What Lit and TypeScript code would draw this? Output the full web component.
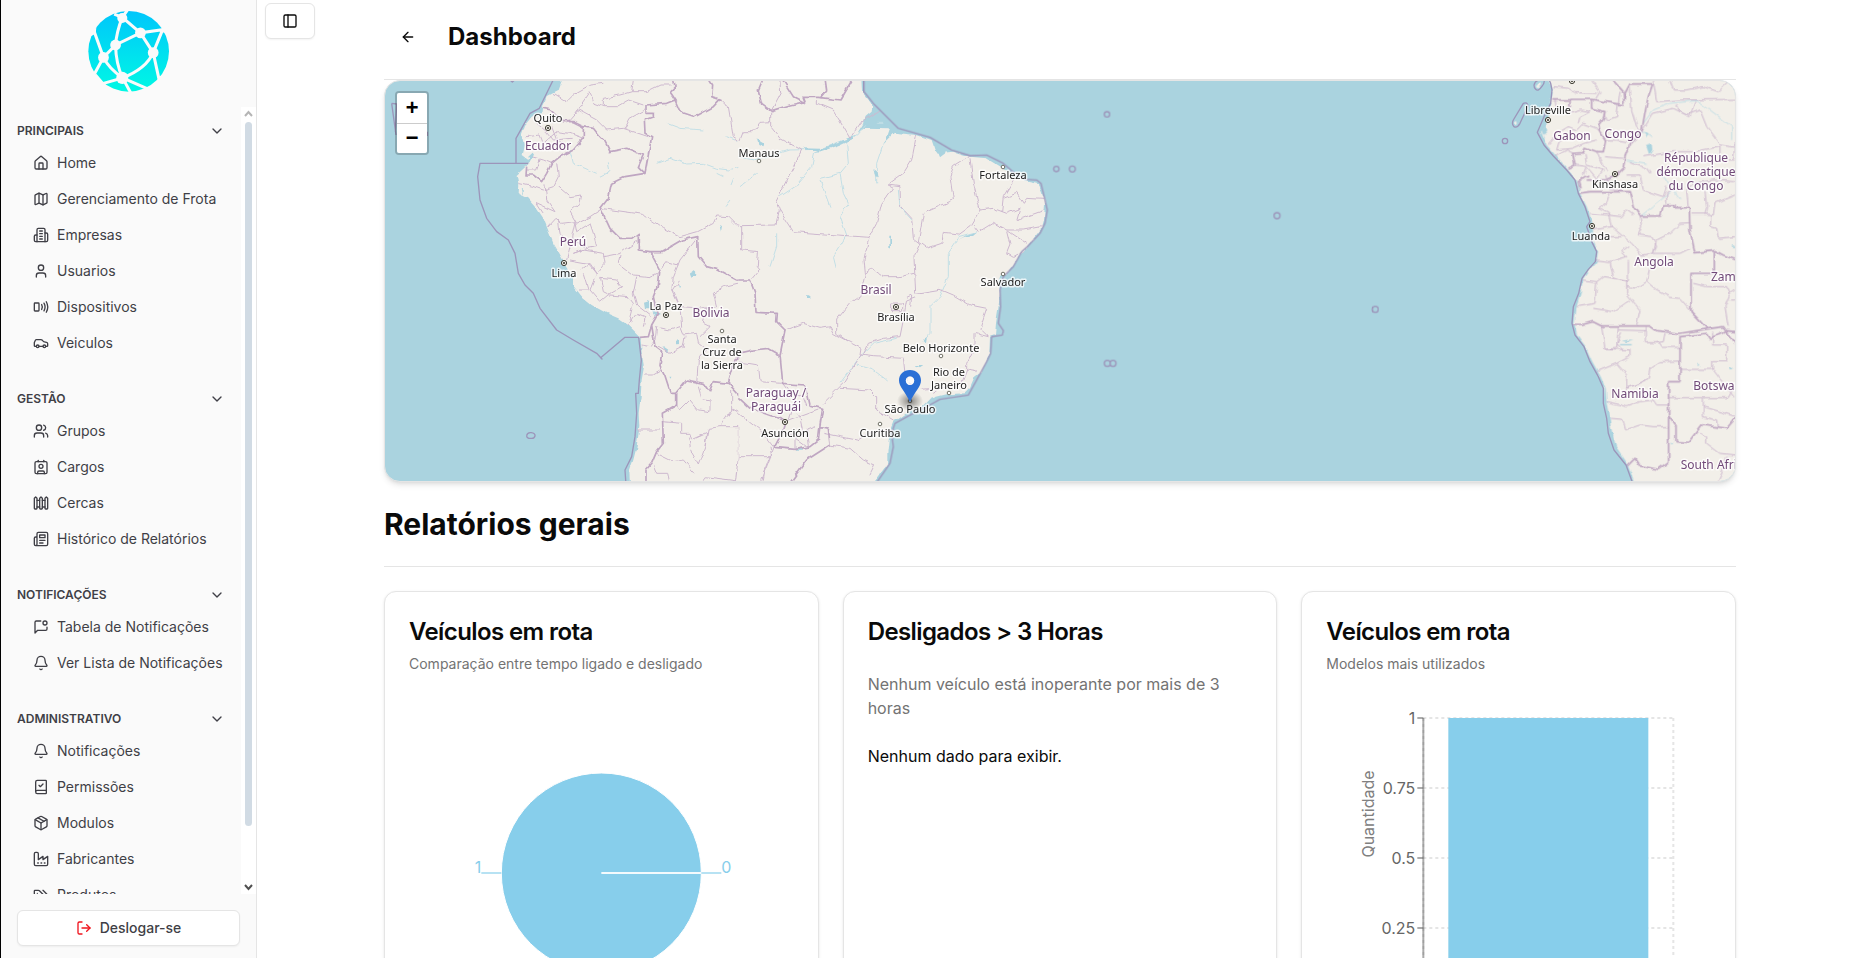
import { LitElement, html, svg, css } from "lit";
import { customElement, property } from "lit/decorators.js";

const ICONS: Record<string, string[]> = {
  house: [
    "M15 21v-8a1 1 0 0 0-1-1h-4a1 1 0 0 0-1 1v8",
    "M3 10a2 2 0 0 1 .709-1.528l7-5.999a2 2 0 0 1 2.582 0l7 5.999A2 2 0 0 1 21 10v9a2 2 0 0 1-2 2H5a2 2 0 0 1-2-2z",
  ],
  map: [
    "M14.106 5.553a2 2 0 0 0 1.788 0l3.659-1.83A1 1 0 0 1 21 4.619v12.764a1 1 0 0 1-.553.894l-4.553 2.277a2 2 0 0 1-1.788 0l-4.212-2.106a2 2 0 0 0-1.788 0l-3.659 1.83A1 1 0 0 1 3 19.381V6.618a1 1 0 0 1 .553-.894l4.553-2.277a2 2 0 0 1 1.788 0z",
    "M15 5.764v15",
    "M9 3.236v15",
  ],
  building: [
    "M6 22V4a2 2 0 0 1 2-2h8a2 2 0 0 1 2 2v18Z",
    "M6 12H4a2 2 0 0 0-2 2v6a2 2 0 0 0 2 2h2",
    "M18 9h2a2 2 0 0 1 2 2v9a2 2 0 0 1-2 2h-2",
    "M10 6h4",
    "M10 10h4",
    "M10 14h4",
    "M10 18h4",
  ],
  user: ["M19 21v-2a4 4 0 0 0-4-4H9a4 4 0 0 0-4 4v2", "M8 7a4 4 0 1 0 8 0a4 4 0 1 0-8 0"],
  nfc: [
    "M3 6h5a1 1 0 0 1 1 1v10a1 1 0 0 1-1 1H3a1 1 0 0 1-1-1V7a1 1 0 0 1 1-1z",
    "M13 8.32a7.43 7.43 0 0 1 0 7.36",
    "M16.46 6.21a11.76 11.76 0 0 1 0 11.58",
    "M19.91 4.1a15.91 15.91 0 0 1 .01 15.8",
  ],
  car: [
    "M19 17h2c.6 0 1-.4 1-1v-3c0-.9-.7-1.7-1.5-1.9C18.7 10.6 16 10 16 10s-1.3-1.4-2.2-2.3c-.5-.4-1.1-.7-1.8-.7H5c-.6 0-1.1.4-1.4.9l-1.4 2.9A3.7 3.7 0 0 0 2 12v4c0 .6.4 1 1 1h2",
    "M5 17a2 2 0 1 0 4 0a2 2 0 1 0-4 0",
    "M9 17h6",
    "M15 17a2 2 0 1 0 4 0a2 2 0 1 0-4 0",
  ],
  users: [
    "M16 21v-2a4 4 0 0 0-4-4H6a4 4 0 0 0-4 4v2",
    "M5 7a4 4 0 1 0 8 0a4 4 0 1 0-8 0",
    "M22 21v-2a4 4 0 0 0-3-3.87",
    "M16 3.13a4 4 0 0 1 0 7.75",
  ],
  contact: [
    "M17 22v-2a2 2 0 0 0-2-2H9a2 2 0 0 0-2 2v2",
    "M5 4h14a2 2 0 0 1 2 2v14a2 2 0 0 1-2 2H5a2 2 0 0 1-2-2V6a2 2 0 0 1 2-2z",
    "M9 11a3 3 0 1 0 6 0a3 3 0 1 0-6 0",
    "M8 2v2",
    "M16 2v2",
  ],
  fence: [
    "M4 3 2 5v15c0 .6.4 1 1 1h2c.6 0 1-.4 1-1V5Z",
    "M6 8h4",
    "M6 18h4",
    "m12 3-2 2v15c0 .6.4 1 1 1h2c.6 0 1-.4 1-1V5Z",
    "M14 8h4",
    "M14 18h4",
    "m20 3-2 2v15c0 .6.4 1 1 1h2c.6 0 1-.4 1-1V5Z",
  ],
  newspaper: [
    "M4 22h16a2 2 0 0 0 2-2V4a2 2 0 0 0-2-2H8a2 2 0 0 0-2 2v16a2 2 0 0 1-2 2Zm0 0a2 2 0 0 1-2-2v-9c0-1.1.9-2 2-2h2",
    "M18 14h-8",
    "M15 18h-5",
    "M10 6h8v4h-8V6Z",
  ],
  messageDot: [
    "M11.7 3H5a2 2 0 0 0-2 2v16l4-4h12a2 2 0 0 0 2-2v-2.7",
    "M15 6a3 3 0 1 0 6 0a3 3 0 1 0-6 0",
  ],
  bell: [
    "M10.268 21a2 2 0 0 0 3.464 0",
    "M3.262 15.326A1 1 0 0 0 4 17h16a1 1 0 0 0 .74-1.673C19.41 13.956 18 12.499 18 8A6 6 0 0 0 6 8c0 4.499-1.411 5.956-2.738 7.326",
  ],
  bookCheck: [
    "M4 19.5v-15A2.5 2.5 0 0 1 6.5 2H19a1 1 0 0 1 1 1v18a1 1 0 0 1-1 1H6.5a1 1 0 0 1 0-5H20",
    "m9 9.5 2 2 4-4",
  ],
  box: [
    "M11 21.73a2 2 0 0 0 2 0l7-4A2 2 0 0 0 21 16V8a2 2 0 0 0-1-1.73l-7-4a2 2 0 0 0-2 0l-7 4A2 2 0 0 0 3 8v8a2 2 0 0 0 1 1.73z",
    "M12 22V12",
    "M3.3 7 12 12l8.7-5",
    "m7.5 4.27 9 5.15",
  ],
  factory: [
    "M2 20a2 2 0 0 0 2 2h16a2 2 0 0 0 2-2V8l-7 5V8l-7 5V4a2 2 0 0 0-2-2H4a2 2 0 0 0-2 2Z",
    "M17 18h1",
    "M12 18h1",
    "M7 18h1",
  ],
  tags: [
    "m15 5 6.3 6.3a2.4 2.4 0 0 1 0 3.4L17 19",
    "M9.586 5.586A2 2 0 0 0 8.172 5H3a1 1 0 0 0-1 1v5.172a2 2 0 0 0 .586 1.414L8.29 18.29a2.426 2.426 0 0 0 3.42 0l3.58-3.58a2.426 2.426 0 0 0 0-3.42z",
    "M6.5 9.5h.01",
  ],
  chevron: ["m6 9 6 6 6-6"],
  logout: ["M9 21H5a2 2 0 0 1-2-2V5a2 2 0 0 1 2-2h4", "m16 17 5-5-5-5", "M21 12H9"],
  panel: [
    "M5 3h14a2 2 0 0 1 2 2v14a2 2 0 0 1-2 2H5a2 2 0 0 1-2-2V5a2 2 0 0 1 2-2z",
    "M9 3v18",
  ],
  arrowLeft: ["m12 19-7-7 7-7", "M19 12H5"],
};

const icon = (name: string) => html`
  <svg class="icon" viewBox="0 0 24 24" width="16" height="16" fill="none" stroke="currentColor"
    stroke-width="2" stroke-linecap="round" stroke-linejoin="round" aria-hidden="true">
    ${ICONS[name].map((d) => svg`<path d=${d}></path>`)}
  </svg>`;

const GROUPS = [
  {
    title: "PRINCIPAIS",
    items: [
      ["house", "Home"],
      ["map", "Gerenciamento de Frota"],
      ["building", "Empresas"],
      ["user", "Usuarios"],
      ["nfc", "Dispositivos"],
      ["car", "Veiculos"],
    ],
  },
  {
    title: "GESTÃO",
    items: [
      ["users", "Grupos"],
      ["contact", "Cargos"],
      ["fence", "Cercas"],
      ["newspaper", "Histórico de Relatórios"],
    ],
  },
  {
    title: "NOTIFICAÇÕES",
    items: [
      ["messageDot", "Tabela de Notificações"],
      ["bell", "Ver Lista de Notificações"],
    ],
  },
  {
    title: "ADMINISTRATIVO",
    items: [
      ["bell", "Notificações"],
      ["bookCheck", "Permissões"],
      ["box", "Modulos"],
      ["factory", "Fabricantes"],
      ["tags", "Produtos"],
    ],
  },
];

@customElement("app-sidebar")
class AppSidebar extends LitElement {
  static styles = css`
    :host {
      display: flex;
      flex-direction: column;
      width: 256px;
      flex: none;
      box-sizing: border-box;
      background: #fafafa;
      border-right: 1px solid #e5e5e5;
      color: #3f3f46;
    }
    .brand {
      display: flex;
      justify-content: center;
      padding: 11px 0 15px;
      flex: none;
    }
    .scroll {
      flex: 1;
      min-height: 0;
      display: flex;
    }
    nav {
      flex: 1;
      overflow: hidden;
    }
    .group {
      padding: 8px 8px 16px;
    }
    .heading {
      display: flex;
      align-items: center;
      justify-content: space-between;
      width: 100%;
      height: 32px;
      padding: 0 8px;
      border: 0;
      background: none;
      font: 600 12px/16px Inter, sans-serif;
      color: inherit;
    }
    ul {
      list-style: none;
      margin: 0;
      padding: 0 0 0 16px;
      display: flex;
      flex-direction: column;
      gap: 4px;
    }
    a {
      display: flex;
      align-items: center;
      gap: 8px;
      height: 32px;
      padding: 0 8px;
      font-size: 14px;
      line-height: 20px;
      color: inherit;
      text-decoration: none;
      white-space: nowrap;
    }
    .track {
      width: 15px;
      flex: none;
      background: #fff;
      display: flex;
      flex-direction: column;
      align-items: center;
      padding: 3px 0;
      box-sizing: border-box;
      color: #b5b5b5;
    }
    .rail {
      flex: 1;
      width: 7px;
      margin: 4px 0;
    }
    .thumb {
      height: 93%;
      border-radius: 4px;
      background: #d1dbe4;
    }
    .down {
      color: #505050;
    }
    .foot {
      flex: none;
      padding: 16px 16px 12px;
    }
    .logout {
      display: flex;
      align-items: center;
      justify-content: center;
      gap: 8px;
      width: 100%;
      height: 36px;
      border: 1px solid #e5e5e5;
      border-radius: 6px;
      background: #fff;
      box-shadow: 0 1px 2px rgba(0, 0, 0, 0.05);
      font: 500 14px/20px Inter, sans-serif;
      color: #3f3f46;
    }
    .logout .icon {
      color: #f0141e;
    }
    .icon {
      flex: none;
    }
  `;

  render() {
    return html`
      <div class="brand">
        <svg viewBox="267 33 241 241" width="81" height="81" role="img" aria-label="Logo">
          <defs>
            <linearGradient id="sky" x1="0" y1="0" x2="0" y2="1">
              <stop offset="0" stop-color="#00c6fb"></stop>
              <stop offset="1" stop-color="#00f8e4"></stop>
            </linearGradient>
          </defs>
          <circle cx="388" cy="153" r="120" fill="url(#sky)"></circle>
          <g fill="none" stroke="#fafafa" stroke-width="9">
            <path d="M345 42L369 52L423 98L498 87M423 98L461 157L490 86M423 98L349 134L313 171L282 228M369 52Q352 95 349 134Q350 190 370 232Q440 205 461 157L480 244M313 171L282 84M313 171Q330 205 370 232L300 252M370 232L396 280M370 232L448 266M369 52L386 28"></path>
          </g>
          <g fill="#fafafa">
            <circle cx="369" cy="54" r="15"></circle>
            <circle cx="423" cy="98" r="16"></circle>
            <circle cx="349" cy="134" r="16"></circle>
            <circle cx="461" cy="157" r="16"></circle>
            <circle cx="313" cy="171" r="16"></circle>
            <circle cx="369" cy="232" r="18"></circle>
            <path d="M262 116L292 80L290 100ZM480 244L474 230L510 215L500 250ZM488 80L506 72L512 100L486 96Z"></path>
            <path d="M282 236L292 220L314 246L306 256Z"></path>
          </g>
        </svg>
      </div>
      <div class="scroll">
        <nav aria-label="Menu">
          ${GROUPS.map(
            (g) => html`<section class="group">
              <button class="heading" type="button" aria-expanded="true">${g.title}${icon("chevron")}</button>
              <ul>
                ${g.items.map(([i, label]) => html`<li><a href="#">${icon(i)}<span>${label}</span></a></li>`)}
              </ul>
            </section>`
          )}
        </nav>
        <div class="track" aria-hidden="true">
          <svg width="9" height="8" viewBox="0 0 9 8" fill="none" stroke="currentColor" stroke-width="2"><path d="M1 6l3.500-4L8 6"></path></svg>
          <div class="rail"><div class="thumb"></div></div>
          <svg class="down" width="9" height="8" viewBox="0 0 9 8" fill="none" stroke="currentColor" stroke-width="2"><path d="M1 2l3.500 4L8 2"></path></svg>
        </div>
      </div>
      <div class="foot">
        <button class="logout" type="button">${icon("logout")}Deslogar-se</button>
      </div>
    `;
  }
}

interface Place {
  x: number;
  y: number;
  lines: string[];
  dot?: [number, number];
  capital?: boolean;
}

const COUNTRIES: Place[] = [
  { x: 163, y: 69, lines: ["Ecuador"] },
  { x: 188, y: 165, lines: ["Perú"] },
  { x: 326, y: 236, lines: ["Bolivia"] },
  { x: 491, y: 213, lines: ["Brasil"] },
  { x: 391, y: 316, lines: ["Paraguay /", "Paraguái"] },
  { x: 1187, y: 59, lines: ["Gabon"] },
  { x: 1238, y: 57, lines: ["Congo"] },
  { x: 1311, y: 81, lines: ["République", "démocratique", "du Congo"] },
  { x: 1269, y: 185, lines: ["Angola"] },
  { x: 1347, y: 200, lines: ["Zambia"] },
  { x: 1250, y: 317, lines: ["Namibia"] },
  { x: 1336, y: 309, lines: ["Botswana"] },
  { x: 1330, y: 388, lines: ["South Africa"] },
];

const CITIES: Place[] = [
  { x: 163, y: 41, lines: ["Quito"], dot: [163, 47], capital: true },
  { x: 179, y: 196, lines: ["Lima"], dot: [179, 182], capital: true },
  { x: 281, y: 229, lines: ["La Paz"], dot: [281, 234], capital: true },
  { x: 337, y: 262, lines: ["Santa", "Cruz de", "la Sierra"], dot: [337, 250] },
  { x: 374, y: 76, lines: ["Manaus"], dot: [374, 80] },
  { x: 618, y: 98, lines: ["Fortaleza"], dot: [618, 86] },
  { x: 618, y: 205, lines: ["Salvador"], dot: [618, 193] },
  { x: 511, y: 240, lines: ["Brasília"], dot: [511, 226], capital: true },
  { x: 556, y: 271, lines: ["Belo Horizonte"], dot: [556, 275] },
  { x: 564, y: 295, lines: ["Rio de", "Janeiro"], dot: [564, 312] },
  { x: 525, y: 332, lines: ["São Paulo"], dot: [525, 320] },
  { x: 400, y: 356, lines: ["Asunción"], dot: [400, 341], capital: true },
  { x: 495, y: 356, lines: ["Curitiba"], dot: [495, 343] },
  { x: 1163, y: 33, lines: ["Libreville"], dot: [1163, 39], capital: true },
  { x: 1230, y: 107, lines: ["Kinshasa"], dot: [1230, 93], capital: true },
  { x: 1206, y: 159, lines: ["Luanda"], dot: [1207, 145], capital: true },
];

// Each sheet is drawn at three units per map pixel, shifted to its own origin.
const SHEETS = [
  {
    origin: "translate(-15 -21) scale(.33333)",
    land: "M578 55L565 90L530 108L520 135L518 155L485 170L465 195L455 225L462 255L455 285L475 300L488 280L478 310L465 322L440 345L445 370L443 400L475 415L497 440L520 475L532 505L550 550L568 580L585 610L612 655L612 680L640 715L665 735L710 760L745 775L775 795L805 825L812 835L815 880L822 920L815 960L812 1010L806 1060L808 1100L800 1160L790 1200L778 1235L780 1275H1145V55Z",
    sea: "M552 55L520 120L508 145L480 160L438 235V310M475 310H330L323 350L330 420L350 475L380 515L415 540L435 580L445 640L465 675L490 700L510 745L560 810L610 840L680 880L696 897L692 893L765 832H806L814 900L808 960L805 1000L797 1000L800 1060L795 1130L785 1190L765 1230L768 1275M65 130L80 132L76 215M65 130L78 225M172 215V228M420 60L427 66L434 60M470 1127Q472 1116 484 1118Q496 1120 495 1128Q492 1137 482 1135Q470 1135 470 1127",
    border:
      "M520 145L545 150L580 185L610 185L640 200L640 235L610 270L570 290L545 310L530 340L515 365L490 345L468 345L470 320M640 200L670 205L690 230L705 245L720 275L770 265L820 285L805 320L825 340L845 230L825 220L823 180L850 170V160H828V135L890 130L915 120L930 155L975 170L1030 140L1050 118L1025 110L1028 75L1015 55M910 55L915 80L900 95L920 125M825 340L765 350L725 370L715 415L692 445L720 505L750 535H785L805 520V570L840 575H875L935 540L983 530L985 590L1010 620L1040 628L1100 660L1145 665M840 575L867 625L862 680L850 710L862 765L845 795L835 830L810 832M845 795L855 860L875 875L870 920L885 950L900 997H920L950 960L1000 970L1018 995L1030 965L1075 970L1135 1035M1075 970L1095 900L1145 870M920 997V1035L877 1060L880 1150L860 1175L845 1210L828 1230V1275",
    state:
      "M552 100L590 125L615 100L660 75L700 70M615 160L660 95L672 130L700 140L740 140L775 120L820 135M590 190L625 150L680 180L710 210L760 205L835 230M700 140L700 115L750 105L785 95L790 60M785 95L830 95L870 75L905 75M765 205L780 175L825 150M500 190L530 215L550 240L605 235M470 230L510 225L520 250L560 215L600 220L640 235M545 200L560 240L590 260M485 290L520 300L545 310M470 330L500 330L510 300M560 310L565 350L550 380L520 390L490 380L445 370M525 370L530 420L555 455M565 380L600 410L635 405L630 430L600 455L620 490L660 470L690 450M555 455L500 430L520 460M532 500L555 475L575 490L615 485L620 515L660 490L670 520L680 560L650 565L610 580M565 475L570 520L600 560L590 600M615 485L605 530L650 565M610 580L640 570L700 580L705 610L680 640L655 610L600 600M700 590L750 580L800 545M750 585L745 610L790 645L840 650L862 640M632 630L660 610L680 640L660 690L690 725L720 700L755 680L740 660L692 655L700 695L720 705M640 640L655 690L630 690M720 705L775 710L790 730L780 770L790 785M800 650L790 700L800 735L845 770M775 795L800 760L825 770L820 800M692 445L820 463L880 505L930 530L983 515L1030 490L1040 468L1075 470L1100 495H1145M1110 495V570H1145M930 660L910 690L930 740L935 800M985 530L930 600L910 650L905 690L930 740L1010 745L1000 790L1020 800L990 830M862 640L890 605L925 615M1145 660L1060 680L1030 700L1040 740L1000 745M855 800L900 810L930 800L940 825L980 820L985 850L1010 870L985 900L980 970M865 860L900 880L940 860L945 830M815 855L840 860L855 840L860 800M825 945L850 945L875 930M803 1110L870 1110M877 1085L935 1090L935 1120L960 1120L965 1140L1010 1120L1005 1160L985 1215L965 1180L955 1130M920 1035L930 1050L960 1020L985 1050L1020 1055L1020 1020L995 1015L985 980M1085 990L1085 1050L1050 1100H1105V1190H1145M1085 1045L1145 1080M1105 1190L1095 1275M1050 1100L1015 1105L1005 1160M860 1180L910 1205L940 1200L975 1240M850 1215L860 1240L890 1240L895 1262M1000 1262L1005 1250L1095 1262M1055 120L1075 140L1085 200L1090 230L1120 250M1110 230L1120 212L1145 225",
    river:
      "M860 310L900 295L950 312L1000 310L1040 325L1080 330L1145 310M890 190L930 205L1000 210M1070 230L1100 242M1040 340L1060 350M1080 375L1090 350M600 270L610 310L680 340M690 350L720 335L715 310M1065 440L1080 420",
    lake: "M822 725L838 720L840 745L825 745ZM845 748L870 765L858 770ZM960 640L975 632L976 645L964 650ZM1048 495L1056 498L1053 515ZM924 672L930 676L927 682ZM880 860L898 872L892 880ZM915 840L926 838L930 852L918 853ZM475 290L488 278L492 284L480 302ZM455 385L462 392L460 405ZM898 950L904 950L902 956ZM965 635L972 630L972 640Z",
  },
  {
    origin: "translate(355 -21) scale(.33333)",
    land: "M364 55L366 95L390 125L400 140L398 155L380 170L375 182L352 220L375 203L450 205L440 235L425 255L462 218L530 225L575 240L585 270L600 290L610 278L640 275L690 290L740 295L790 325L830 355L890 368L905 395L915 430L912 480L905 505L865 555L845 580L825 610L800 645L785 640L776 660L780 700L775 745L768 790L765 825L750 830L748 880L725 935L705 950L690 985L675 1000L620 1003L590 1010L570 1018L545 1045L510 1055L475 1080L462 1078L453 1100L450 1130L445 1180L445 1210L400 1270H-5V55Z",
    sea: "M372 55V95L400 130L475 205L570 232L635 270L690 287L740 285L790 310L830 345L858 358L890 360L903 370L915 420L922 450L915 490L900 520L862 560L845 575L820 620L790 650L780 690L782 740L775 790L790 812L787 825L755 830L752 880L740 905L710 960L685 1005L600 1018L560 1040L510 1065L465 1090L455 1120L460 1160L450 1210L405 1275M1093 163a8 8 0 1 0 16 0a8 8 0 1 0-16 0M941 327a8 8 0 1 0 16 0a8 8 0 1 0-16 0M988 327a9 9 0 1 0 18 0a9 9 0 1 0-18 0M1093 910a9 9 0 1 0 18 0a9 9 0 1 0-18 0M1110 910a9 9 0 1 0 18 0a9 9 0 1 0-18 0M1602 467a9 9 0 1 0 18 0a9 9 0 1 0-18 0M1897 748a9 9 0 1 0 18 0a9 9 0 1 0-18 0",
    border:
      "M70 55L55 90L65 130L95 152L150 135L195 125L190 112H235L300 120L335 60M125 55L160 110L195 128M255 55L260 90L240 115M-5 660L30 660L45 700L48 757L112 760L110 785L135 810L120 885L128 970L190 975L200 990L210 1035L248 1045L240 1095L235 1140L210 1160L165 1168L103 1162L120 1130L135 1085M-5 880L40 870L85 865L120 885M-5 1012L30 1045L130 1080M240 1100L265 1105L270 1155L200 1200L145 1275",
    state:
      "M92 155V200L120 235L185 270L108 425L118 450L160 515L387 532M92 185L60 187L40 215L10 215L0 240M0 497L108 495L118 450M5 497V570L55 575L52 620L60 630L35 660M232 120V130L280 150L330 235L360 190L420 150M460 385L425 430L410 490L387 532L372 600L376 640L395 625L430 650L480 650L522 640M376 640L360 710L330 730L290 780L290 820L325 845L363 865L360 885M135 810L190 790L240 805L270 800L280 820L325 845M360 885L400 890L490 895L495 940M370 885L385 850L430 835L480 830L490 780L500 720L527 710M363 885L310 970L250 1030M300 985L390 990L410 1010L410 1050L460 1080M250 1120L350 1140L380 1120L460 1110M270 1155L330 1165L370 1200L405 1215L390 1245M688 290L640 320L630 350L640 420L550 460L535 545M690 295L700 370L720 450L690 500L655 525L610 520L605 550L560 565L540 550M720 450L760 445L800 460L840 445L830 480L915 450M720 515L760 490L800 510L850 510L905 500M800 510L860 550M800 515L810 555L800 580L820 592L850 575M785 455L790 410L820 360M790 415L830 400L850 430L860 415L910 418M700 495L715 515M745 830L705 820L705 860L680 910L680 930L710 935M680 930L665 970L620 975L580 1000M495 940L520 990L580 985M-5 905L55 915L60 965L125 970M120 62L122 100L95 150M-5 1190H95L90 1160M103 1162L65 1262M-5 1060L60 1110L100 1160M90 1190L75 1230L70 1262M128 970L150 1000L190 1010L200 1035M140 1085L180 1070L235 1050M165 1168L165 1120L130 1120M180 1075L190 1120L160 1130L200 1160M205 1160L200 1110L225 1100M145 1080L155 1040L180 1070M455 732H488V752H455ZM500 712L515 705L512 740M530 225L515 300L490 340L442 375L480 380L482 440L515 475L520 535L540 550L522 590L527 700L600 688L640 705L690 735L740 745L720 805L745 830M442 375L460 385",
    river:
      "M-5 290L40 300L100 285L150 270L240 268L300 245L350 225L380 190L430 190M225 275L215 320L165 380L120 410M0 380L50 340M320 250L325 310L300 340L310 400L325 430L300 470L320 525L280 590L290 630M240 355L300 340M240 360L270 440M430 250L410 310L410 370M475 390L480 440L515 480M655 535L625 580L625 650L600 710L570 740L570 820L550 845M655 530L710 515M110 520L110 560L90 620M300 970L360 890L400 850L470 835M350 915L400 930L440 960",
    lake: "M50 235L75 250L70 259L55 252ZM190 262L240 263L235 270L200 269ZM400 325L413 335L416 355L405 350ZM448 530H453V565H448ZM655 540L680 524L710 515L700 524L670 532ZM590 265L620 280L600 295ZM555 1035L585 1018L575 1028ZM198 706H208V714H198ZM370 178L415 188L400 197L370 192ZM525 915L550 915L540 922ZM165 1165H188V1172H165ZM550 835L560 832L558 850ZM220 275L240 268L300 245L345 225L340 236L300 255L245 274Z",
  },
  {
    origin: "translate(1055 -21) scale(.33333)",
    land: "M318 55L332 70L338 85L337 105L330 125L332 150L322 180L318 200L303 215L320 255L350 290L385 330L410 360L420 400L440 440L458 490L460 540L474 575L470 605L448 630L430 655L422 700L410 740L403 790L412 825L437 860L457 905L482 950L497 985L500 1030L508 1070L515 1110L528 1160L562 1210L585 1275H895V55ZM288 78L300 68L303 76L292 86ZM223 185L232 180L233 190L226 193Z",
    sea: "M325 55L332 70L336 90L332 130L312 170L292 217L312 255L340 288L380 330L405 360L415 400L435 440L450 485L440 500L447 520L455 545L470 575L466 605L445 628L426 655L416 700L400 740L396 790L405 825L432 860L450 905L475 950L490 985L490 1030L500 1075L505 1120L522 1170L558 1215L580 1275M282 75Q285 62 298 60L312 60Q315 70 305 80Q295 95 287 88Q282 84 282 75M250 130Q262 125 264 138L240 190Q232 205 222 200Q214 192 220 180ZM187 243a8 8 0 1 0 16 0a8 8 0 1 0-16 0",
    border:
      "M337 120H390V138V118H455L550 135L555 100L570 72H638L625 110L618 140L610 185L605 215L570 250L555 290L550 325L530 345M520 62L550 95L552 130M455 120V145L495 155L490 175L475 195L480 215L497 240L490 275L470 275L435 262L430 278L398 280L405 315L385 325M415 400L450 395H568L580 440L600 468L662 468L670 435H705V443H748L750 510L765 578L825 572L850 585L890 600M420 385L415 365L445 345M440 360H500L530 345M823 575V640H753V755L800 805M398 793L430 793L458 785L485 798H630L650 812L720 820L800 807L850 800L885 850M720 965V830L800 820L810 835L860 812L890 815M720 965H686V1205L655 1228L600 1218L585 1195L562 1218M686 1068L708 1100V1145L745 1147L785 1095L860 1105L890 1070",
    state:
      "M600 468L605 500L595 525L635 530L650 560L640 580M620 665L650 690L690 712L720 715L755 755L800 805M340 80L385 85L405 98L470 100M455 62L480 95L465 120M345 120L350 150L390 160L425 150L450 155M325 255L360 215L385 200L410 210L430 190L470 205L480 215M360 235L350 270L395 265L430 250L470 240M415 190L420 170L450 155M345 290L380 270L400 280M500 240L530 240L560 245M495 290L550 295M570 72L575 150L590 200L605 215M540 95L530 170L500 180L490 160M405 315L440 320L470 355L490 330L440 315L435 285M440 320L430 345M470 275L485 310L500 330M570 305L620 325L630 340M560 345L600 345L610 390L670 410L680 380M500 345L510 385L550 395M680 430L680 400L720 380M640 62L650 125L720 120L890 118M690 62L700 90L740 90L790 80L835 95L870 62M605 215L640 160L700 145L740 165L780 150L800 200L840 255L885 262M765 125L750 170L720 155L710 135M610 290L700 275L760 275L840 260V300L880 300L885 250M745 443L740 390L760 370L820 360L885 365M795 395L800 440L795 465M755 462H795L820 465L825 430L885 405M812 465V500L830 505L835 535L885 530M510 400L500 430L475 445L505 460L515 500L460 510M450 460L500 465L545 470L560 450L580 465M515 500L550 530L575 550L605 585L640 580L650 540L690 520L720 490L748 488M475 530L545 530M640 580L720 580L750 565M468 600L510 605L560 590L545 575L565 560M510 605L520 650L565 665L565 600M428 660L470 665L490 650L560 660V700L600 750L590 795M470 665L465 730L410 740M460 745L520 755L570 720M560 680L590 685L620 665L630 620M485 798L495 865L530 862L535 800M535 810L616 812V848L655 848L665 862L718 862M616 812V800M545 820L530 850L548 870M495 865L570 870L570 890L530 910L560 945L560 985L620 960M470 935L530 910M555 985L600 970L625 955L630 925L660 905L718 903M650 848L670 845L675 820M500 1025L545 1035L560 1040L600 1025L640 1020L650 1035H686M510 1075L545 1078L555 1110L600 1095L640 1100H686M722 928H818V905L860 905V855L818 855V815M820 930L885 1015M686 1013H865L880 985M790 1015V1070L830 1080L832 1100M790 1040L885 1068M780 1120L800 1130L800 1150L840 1180L885 1185M860 1190L850 1230L835 1262M760 670L800 680L860 680L870 700L885 690M870 700L855 740L865 800M870 720H885",
    river:
      "M610 190L640 150L690 130L770 122L810 150L850 180L875 200V240M605 215L640 230M600 470L700 390L720 420M560 300L620 310M660 330L690 380",
    lake: "M618 255L635 250L637 270L628 285ZM613 215L622 220L618 230ZM540 852L575 852V856H540ZM545 842L580 838L560 846ZM305 212L318 200L322 212L310 225ZM772 912h5v5h-5ZM868 922h8v5h-8ZM693 1146h5v6h-5ZM876 556h6v5h-6Z",
  },
];

@customElement("fleet-map")
class FleetMap extends LitElement {
  static styles = css`
    :host {
      display: block;
      position: relative;
      height: 400px;
      overflow: hidden;
      border: 1px solid #e5e5e5;
      border-radius: 16px;
      background: #aad3df;
      box-shadow: 0 4px 6px -1px rgba(0, 0, 0, 0.1), 0 2px 4px -2px rgba(0, 0, 0, 0.1);
    }
    .canvas {
      display: block;
      width: 100%;
      height: 100%;
      font-family: "Noto Sans", sans-serif;
      font-size: 11px;
      text-anchor: middle;
    }
    .land {
      fill: #f2efe9;
    }
    .sea,
    .border,
    .state,
    .river {
      fill: none;
      stroke-linejoin: round;
    }
    .sea {
      stroke: #9c95ba;
      stroke-width: 4;
    }
    .border {
      stroke: #bfa6c2;
      stroke-width: 5;
    }
    .state {
      stroke: #cdb8cf;
      stroke-width: 3;
    }
    .river {
      stroke: #c3dfe6;
      stroke-width: 3;
    }
    .lake {
      fill: #aad3df;
    }
    .country,
    .city {
      paint-order: stroke;
      stroke: rgba(255, 255, 255, 0.75);
      stroke-width: 3px;
      stroke-linejoin: round;
    }
    .country {
      fill: #714a79;
      font-size: 12px;
    }
    .city {
      fill: #222;
    }
    .zoom {
      position: absolute;
      left: 10px;
      top: 10px;
      display: flex;
      flex-direction: column;
      border: 2px solid rgba(0, 0, 0, 0.2);
      border-radius: 4px;
      background-clip: padding-box;
      overflow: hidden;
    }
    .zoom button {
      width: 30px;
      height: 30px;
      padding: 3px 0 0;
      border: 0;
      background: #fff;
      color: #000;
      font: bold 22px/26px "Liberation Mono", monospace;
    }
    .zoom button + button {
      border-top: 1px solid #ccc;
    }
  `;

  private label(kind: string, gap: number, p: Place) {
    return p.lines.map((t, i) => svg`<text class=${kind} x=${p.x} y=${p.y + i * gap}>${t}</text>`);
  }

  render() {
    return html`
      <svg class="canvas" viewBox="0 0 1350 400" preserveAspectRatio="xMidYMid slice" role="img" aria-label="Mapa">
        <defs>
          <filter id="rough" x="0" y="0" width="1350" height="400" filterUnits="userSpaceOnUse" color-interpolation-filters="sRGB">
            <feTurbulence type="fractalNoise" baseFrequency=".14" numOctaves="1" seed="4"></feTurbulence>
            <feDisplacementMap in="SourceGraphic" scale="5" xChannelSelector="R" yChannelSelector="G"></feDisplacementMap>
          </filter>
          <radialGradient id="shade">
            <stop offset="0" stop-color="#000" stop-opacity=".45"></stop>
            <stop offset="1" stop-color="#000" stop-opacity="0"></stop>
          </radialGradient>
        </defs>
        <g filter="url(#rough)">
          ${SHEETS.map(
            (s) => svg`<g transform=${s.origin}>
              <path class="land" d=${s.land}></path>
              <path class="river" d=${s.river}></path>
              <path class="lake" d=${s.lake}></path>
              <path class="state" d=${s.state}></path>
              <path class="border" d=${s.border}></path>
            </g>`
          )}
        </g>
        ${SHEETS.map((s) => svg`<path class="sea" transform=${s.origin} d=${s.sea}></path>`)}
        ${[...CITIES, { x: 0, y: 0, lines: [], dot: [1187, 0], capital: true } as Place].map((p) =>
          p.capital
            ? svg`<g><circle cx=${p.dot![0]} cy=${p.dot![1]} r="2.600" fill="#f2efe9" stroke="#3c3c32"></circle><circle cx=${p.dot![0]} cy=${p.dot![1]} r="1.100" fill="#3c3c32"></circle></g>`
            : svg`<circle cx=${p.dot![0]} cy=${p.dot![1]} r="1.800" fill="#fff" stroke="#6e6e64"></circle>`
        )}
        ${COUNTRIES.map((p) => this.label("country", 14, p))}
        ${CITIES.map((p) => this.label("city", 13, p))}
        <ellipse cx="525" cy="320" rx="13" ry="10" fill="url(#shade)"></ellipse>
        <path fill="#2a6fd6" fill-rule="evenodd" d="M525 289C518.500 289 514 293.600 514 299.500C514 306 520 310 525 321C530 310 536 306 536 299.500C536 293.600 531.500 289 525 289ZM525 295.500a4.200 4.200 0 1 1 0 8.400a4.200 4.200 0 1 1 0-8.400Z"></path>
        <circle cx="525" cy="299.700" r="4.200" fill="#fff" opacity=".7"></circle>
      </svg>
      <div class="zoom">
        <button type="button" aria-label="Aumentar zoom">+</button>
        <button type="button" aria-label="Diminuir zoom">−</button>
      </div>
    `;
  }
}

@customElement("report-card")
class ReportCard extends LitElement {
  @property() heading = "";
  @property() description = "";

  static styles = css`
    :host {
      display: block;
      min-width: 0;
      box-sizing: border-box;
      min-height: 482px;
      padding: 24px;
      border: 1px solid #e5e5e5;
      border-radius: 12px;
      background: #fff;
      box-shadow: 0 1px 3px rgba(0, 0, 0, 0.1);
    }
    h3 {
      margin: 0;
      font-size: 24px;
      line-height: 32px;
      font-weight: 600;
      letter-spacing: -0.025em;
    }
    p {
      margin: 6px 0 0;
      font-size: 14px;
      line-height: 20px;
      color: #737373;
    }
    .body {
      margin-top: 24px;
    }
  `;

  render() {
    return html`<h3>${this.heading}</h3>
      ${this.description ? html`<p>${this.description}</p>` : ""}
      <div class="body"><slot></slot></div>`;
  }
}

@customElement("app-root")
class AppRoot extends LitElement {
  static styles = css`
    :host {
      display: flex;
      height: 100vh;
      overflow: hidden;
      box-sizing: border-box;
      border-left: 1px solid #000;
      background: #fff;
      color: #0a0a0a;
      font-family: Inter, sans-serif;
      font-size: 16px;
      line-height: 24px;
    }
    main {
      flex: 1;
      min-width: 0;
      display: flex;
      align-items: flex-start;
      padding: 0 52px 0 8px;
    }
    .toggle {
      flex: none;
      display: flex;
      align-items: center;
      justify-content: center;
      width: 50px;
      height: 36px;
      margin-top: 3px;
      padding: 0;
      border: 1px solid #e5e5e5;
      border-radius: 6px;
      background: #fff;
      color: inherit;
      box-shadow: 0 1px 2px rgba(0, 0, 0, 0.05);
    }
    .page {
      flex: 1;
      min-width: 0;
      max-width: 1352px;
      margin: 0 auto;
      padding: 0 24px;
    }
    header {
      display: flex;
      align-items: center;
      gap: 16px;
      height: 79px;
      padding-bottom: 5px;
      box-sizing: border-box;
    }
    .rule {
      border: 0;
      border-top: 1px solid #e5e5e5;
      margin: 0;
    }
    .back {
      display: flex;
      align-items: center;
      justify-content: center;
      width: 48px;
      height: 36px;
      padding: 0;
      border: 0;
      background: none;
      color: inherit;
    }
    h1 {
      margin: 0;
      font-size: 24px;
      line-height: 32px;
      font-weight: 700;
    }
    h2 {
      margin: 0;
      padding: 24px 0;
      font-size: 30px;
      line-height: 36px;
      font-weight: 700;
    }
    .cards {
      display: grid;
      grid-template-columns: repeat(3, minmax(0, 1fr));
      gap: 24px;
      margin-top: 24px;
    }
    .muted {
      margin: 0 0 24px;
      color: #737373;
    }
    .empty {
      margin: 0;
    }
    .chart {
      display: block;
      width: 100%;
      height: 350px;
      font-size: 16px;
    }
    .end {
      text-anchor: end;
    }
    .middle {
      text-anchor: middle;
    }
  `;

  private pie() {
    return html`<svg class="chart" viewBox="0 0 384 350" role="img" aria-label="Comparação entre tempo ligado e desligado">
      <circle cx="192" cy="175" r="100" fill="#87ceeb" stroke="#fff"></circle>
      <path d="M192 175h100" stroke="#fff" stroke-opacity=".9" stroke-width="2"></path>
      <path d="M92 175h-20M292 175h20" stroke="#87ceeb" stroke-opacity=".6" stroke-width="2"></path>
      <text class="end" x="72" y="175" fill="#87ceeb">1</text>
      <text x="312" y="175" fill="#87ceeb">0</text>
    </svg>`;
  }

  private bars() {
    const ticks = ["1", "0.75", "0.5", "0.25", "0"];
    return html`<svg class="chart" viewBox="0 0 384 350" role="img" aria-label="Modelos mais utilizados">
      <g stroke="#ccc" stroke-opacity=".5" stroke-width="2" stroke-dasharray="3 3">
        ${ticks.map((_, i) => svg`<path d=${`M97 ${20 + i * 70}h250`}></path>`)}
        <path d="M97 20v280M347 20v280"></path>
      </g>
      <g stroke="#666" stroke-opacity=".55" stroke-width="2">
        <path d="M97 20v280"></path>
        ${ticks.map((_, i) => svg`<path d=${`M91 ${20 + i * 70}h6`}></path>`)}
      </g>
      ${ticks.map((t, i) => svg`<text class="end" x="89" y=${26 + i * 70} fill="#666">${t}</text>`)}
      <text class="middle" fill="#808080" transform="translate(48 116) rotate(-90)">Quantidade</text>
      <rect x="122" y="20" width="200" height="280" fill="#87ceeb"></rect>
    </svg>`;
  }

  render() {
    return html`
      <app-sidebar></app-sidebar>
      <main>
        <button class="toggle" type="button" aria-label="Alternar menu">${icon("panel")}</button>
        <div class="page">
          <header>
            <button class="back" type="button" aria-label="Voltar">${icon("arrowLeft")}</button>
            <h1>Dashboard</h1>
          </header>
          <hr class="rule" />
          <fleet-map></fleet-map>
          <h2>Relatórios gerais</h2>
          <hr class="rule" />
          <div class="cards">
            <report-card heading="Veículos em rota" description="Comparação entre tempo ligado e desligado">${this.pie()}</report-card>
            <report-card heading="Desligados > 3 Horas">
              <p class="muted">Nenhum veículo está inoperante por mais de 3 horas</p>
              <p class="empty">Nenhum dado para exibir.</p>
            </report-card>
            <report-card heading="Veículos em rota" description="Modelos mais utilizados">${this.bars()}</report-card>
          </div>
        </div>
      </main>
    `;
  }
}
